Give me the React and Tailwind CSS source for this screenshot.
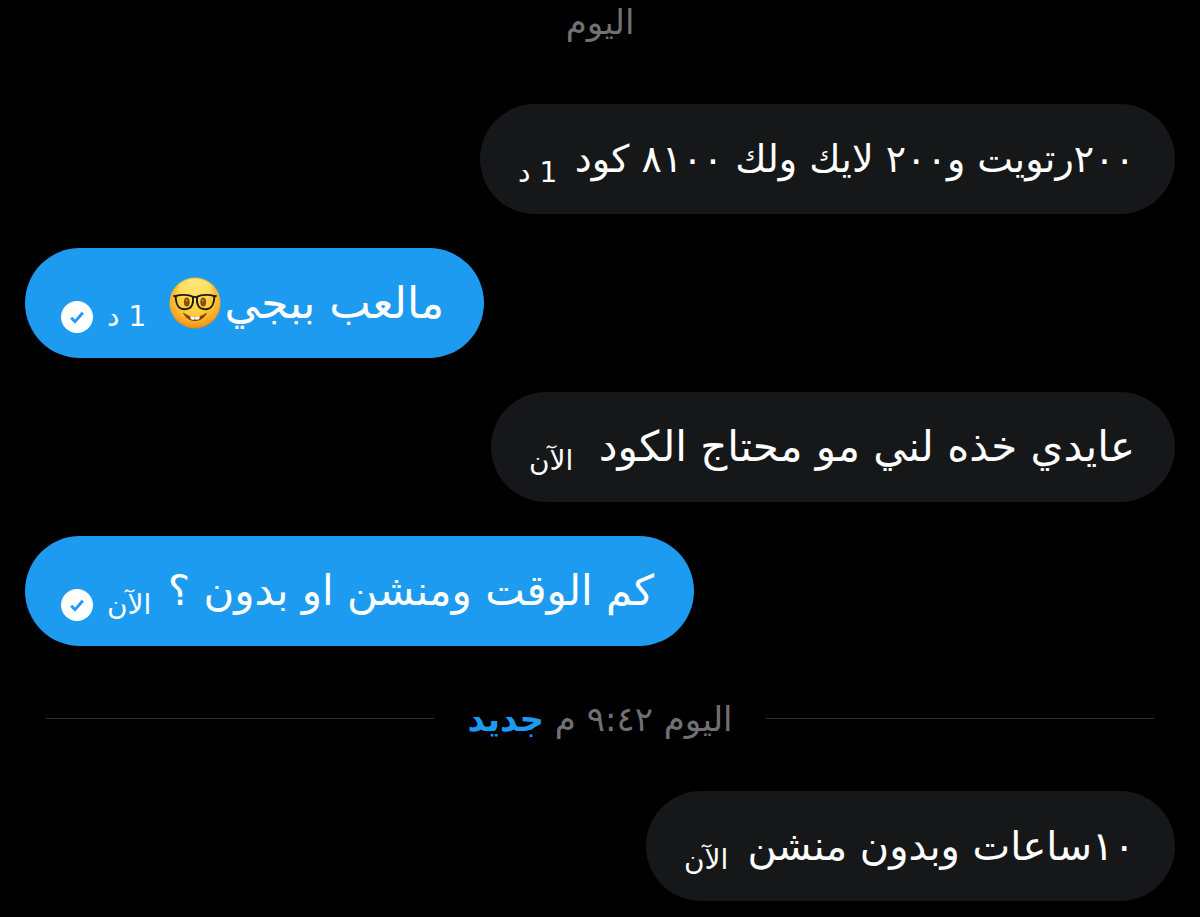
function NerdFace() {
  return (
    <svg viewBox="0 0 52 52" className="me-1 ms-1 h-[52px] w-[52px] shrink-0" role="img" aria-label="🤓">
      <defs>
        <radialGradient id="skin" cx="50%" cy="38%" r="64%">
          <stop offset="0" stopColor="#ffe45e" />
          <stop offset="0.55" stopColor="#fccb38" />
          <stop offset="0.85" stopColor="#f5a320" />
          <stop offset="1" stopColor="#e5800d" />
        </radialGradient>
        <linearGradient id="shine" x1="0" y1="0" x2="0" y2="1">
          <stop offset="0" stopColor="#fff7a8" stopOpacity="0.7" />
          <stop offset="1" stopColor="#ffe566" stopOpacity="0" />
        </linearGradient>
      </defs>
      <circle cx="26" cy="26" r="25.5" fill="url(#skin)" />
      <ellipse cx="26" cy="14" rx="18" ry="12" fill="url(#shine)" />
      <ellipse cx="17.8" cy="25" rx="2.9" ry="4.5" fill="#8a4a0c" />
      <ellipse cx="34.2" cy="25" rx="2.9" ry="4.5" fill="#8a4a0c" />
      <circle cx="17.6" cy="23.4" r="1.1" fill="#c98a3a" />
      <circle cx="34" cy="23.4" r="1.1" fill="#c98a3a" />
      <path d="M14.5 36.4 Q26 44.5 37.5 36.4 Q33 43.6 26 43.6 Q19 43.6 14.5 36.4Z" fill="#7a3a08" stroke="#8a4208" strokeWidth="1" strokeLinejoin="round" />
      <path d="M21.4 39 Q23.6 39.8 25.8 39.8 V42.6 Q22.6 43.4 21.4 41.6ZM26.2 39.8 Q28.4 39.8 30.6 39 V41.6 Q29.4 43.4 26.2 42.6Z" fill="#fffdf6" />
      <g fill="none" stroke="#1c1b19" strokeLinejoin="round" strokeWidth="1.9">
        <path d="M6.6 19.2 C11 17.4 19.5 17.4 23.8 19.6 C24.8 25.5 23.6 32.2 15.6 32.2 C8.6 32.2 7 26.6 6.6 19.2Z" />
        <path d="M45.4 19.2 C41 17.4 32.5 17.4 28.2 19.6 C27.2 25.5 28.4 32.2 36.4 32.2 C43.4 32.2 45 26.6 45.4 19.2Z" />
        <path d="M23.8 20.6 Q26 19.2 28.2 20.6M4.4 18.6 L7.4 20M47.6 18.6 L44.6 20" />
      </g>
    </svg>
  );
}

function SentMark() {
  return (
    <svg viewBox="0 0 32 32" className="h-8 w-8 shrink-0" role="img" aria-label="تم الإرسال">
      <circle cx="16" cy="16" r="16" fill="#fff" />
      <path d="M10.2 16.8 L14 20.6 L21.8 11.8" fill="none" stroke="#1d9bf0" strokeWidth="2.9" />
    </svg>
  );
}

function Message({ text, time, sent, emoji, width, size = "text-[42px]" }) {
  return (
    <li
      className={`flex min-h-[110px] max-w-full items-center justify-between gap-3 rounded-[55px] pr-10 ${width} ${
        sent ? "self-end bg-[#1d9bf0] pl-9" : "self-start bg-[#151719] pl-[38px]"
      }`}
    >
      <p className={`flex items-center leading-[60px] whitespace-nowrap ${size}`}>
        {text}
        {emoji && <NerdFace />}
      </p>
      <div className="flex items-center gap-[14px] pt-7">
        <time className="text-[28px] leading-8 whitespace-nowrap">{time}</time>
        {sent && <SentMark />}
      </div>
    </li>
  );
}

export default function App() {
  return (
    <main
      dir="rtl"
      lang="ar"
      className="min-h-screen bg-black px-[25px] pb-4 font-['DejaVu_Sans','Liberation_Sans',sans-serif] text-white"
    >
      <h2 className="pb-[60px] text-center text-[34px] leading-[44px] text-[#707174]">اليوم</h2>
      <ul className="flex flex-col gap-[34px]">
        <Message text="٢٠٠رتويت و٢٠٠ لايك ولك ٨١٠٠ كود" time="1 د" width="w-[695px]" size="text-[38px]" />
        <Message text="مالعب ببجي" emoji time="1 د" sent width="w-[459px]" size="text-[44px]" />
        <Message text="عايدي خذه لني مو محتاج الكود" time="الآن" width="w-[684px]" />
        <Message text="كم الوقت ومنشن او بدون ؟" time="الآن" sent width="w-[669px]" />
      </ul>
      <div className="flex h-[145px] items-center gap-[34px] px-[21px]">
        <hr className="flex-1 border-[#2f3336]" />
        <p className="text-[34px] leading-[44px] whitespace-nowrap text-[#707174]">
          اليوم ٩:٤٢ م <strong className="text-[#1d9bf0]">جديد</strong>
        </p>
        <hr className="flex-1 border-[#2f3336]" />
      </div>
      <ul className="flex flex-col">
        <Message text="١٠ساعات وبدون منشن" time="الآن" width="w-[529px]" size="text-[40px]" />
      </ul>
    </main>
  );
}
